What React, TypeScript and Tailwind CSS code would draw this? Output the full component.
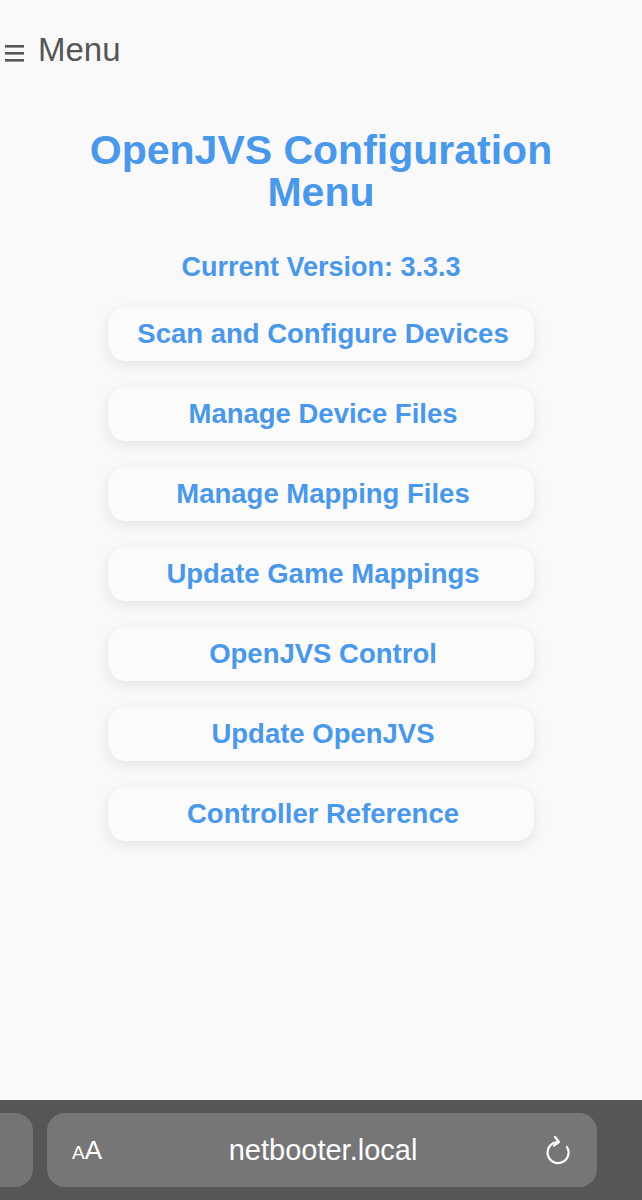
import React from "react";

const items = [
  "Scan and Configure Devices",
  "Manage Device Files",
  "Manage Mapping Files",
  "Update Game Mappings",
  "OpenJVS Control",
  "Update OpenJVS",
  "Controller Reference",
];

export default function App() {
  return (
    <div
      className="flex min-h-[1200px] w-[642px] flex-col bg-[#f9f9f9]"
      style={{ fontFamily: '"Liberation Sans", Arial, sans-serif' }}
    >
      <div className="flex h-[100px] items-start pt-[32px]">
        <div className="flex items-center gap-[14px] pl-[5px] text-[#555555]">
          <svg width="19" height="18" viewBox="0 0 19 18" className="mt-[5px]">
            <rect x="0" y="1" width="19" height="2.6" fill="#555555" />
            <rect x="0" y="8" width="19" height="2.6" fill="#555555" />
            <rect x="0" y="15" width="19" height="2.6" fill="#555555" />
          </svg>
          <span className="text-[33px] leading-[36px]">Menu</span>
        </div>
      </div>

      <h1 className="mt-[29px] text-center text-[41px] font-bold leading-[42px] text-[#4a98e9]">
        OpenJVS Configuration
        <br />
        Menu
      </h1>

      <div className="mt-[38px] text-center text-[27px] font-bold leading-[32px] text-[#4a98e9]">
        Current Version: 3.3.3
      </div>

      <div className="mt-[24px] flex flex-col items-center gap-[26px]">
        {items.map((t) => (
          <button
            key={t}
            className="flex h-[54px] w-[426px] items-center justify-center rounded-[18px] bg-[#fbfbfb] pl-[4px] text-[27.5px] font-bold text-[#4a98e9] shadow-[0_4px_14px_rgba(0,0,0,0.09)]"
          >
            {t}
          </button>
        ))}
      </div>

      <div className="mt-auto flex h-[100px] items-start gap-[14px] bg-[#565656] pt-[13px]">
        <div className="h-[74px] w-[33px] shrink-0 rounded-r-[18px] bg-[#747474]" />
        <div className="flex h-[74px] w-[550px] items-center rounded-[18px] bg-[#767676] px-[25px] text-white">
          <span className="flex items-baseline">
            <span className="text-[19px] leading-none">A</span>
            <span className="text-[26px] leading-none">A</span>
          </span>
          <span className="flex-1 text-center text-[29px] leading-none">netbooter.local</span>
          <svg width="28" height="30" viewBox="0 0 28 30" fill="none" stroke="white" strokeWidth="2.2" strokeLinecap="round" strokeLinejoin="round">
            <path d="M14 7 A 10.5 10.5 0 1 0 23 12" />
            <path d="M11 2 L15 7 L10 10.5" />
          </svg>
        </div>
      </div>
    </div>
  );
}
